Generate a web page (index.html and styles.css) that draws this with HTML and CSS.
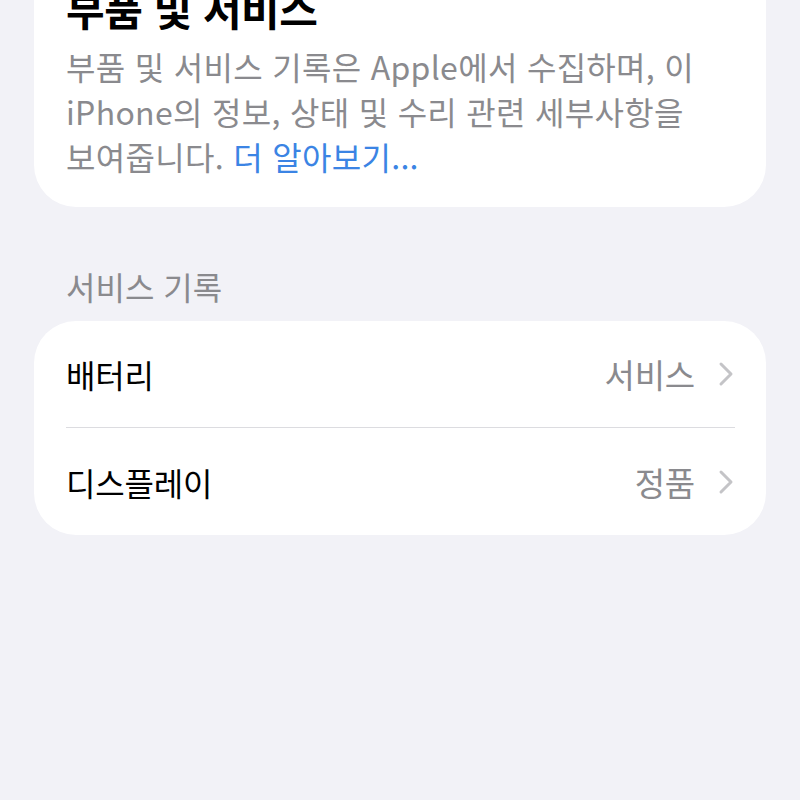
FILE: index.html
```html
<!DOCTYPE html>
<html lang="ko">
<head>
<meta charset="utf-8">
<link rel="stylesheet" href="styles.css">
</head>
<body>
<div class="page">
  <section class="card intro">
    <h1 class="title">부품 및 서비스</h1>
    <p class="desc">부품 및 서비스 기록은 Apple에서 수집하며, 이<br>iPhone의 정보, 상태 및 수리 관련 세부사항을<br>보여줍니다. <span class="link">더 알아보기...</span></p>
  </section>
  <h2 class="section-header">서비스 기록</h2>
  <section class="card list">
    <div class="row">
      <span class="label">배터리</span>
      <span class="value">서비스</span>
      <svg class="chev" width="16" height="26" viewBox="0 0 16 26"><path d="M3 3 L13 13 L3 23" fill="none" stroke="#c4c4c7" stroke-width="3" stroke-linecap="round" stroke-linejoin="round"/></svg>
    </div>
    <div class="sep"></div>
    <div class="row">
      <span class="label">디스플레이</span>
      <span class="value">정품</span>
      <svg class="chev" width="16" height="26" viewBox="0 0 16 26"><path d="M3 3 L13 13 L3 23" fill="none" stroke="#c4c4c7" stroke-width="3" stroke-linecap="round" stroke-linejoin="round"/></svg>
    </div>
  </section>
</div>
</body>
</html>
```
FILE: styles.css
```css
html, body {
  margin: 0;
  padding: 0;
  background: #f2f2f7;
  height: 100%;
  overflow: hidden;
}
body {
  font-family: "Noto Sans CJK KR", "Noto Sans", sans-serif;
}
.page {
  padding: 0 34px;
}
.card {
  background: #ffffff;
  border-radius: 42px;
}
.intro {
  margin-top: -44px;
  padding: 28px 32px 28px 32px;
}
.title {
  margin: 0;
  font-size: 42px;
  line-height: 48px;
  font-weight: 700;
  color: #000;
  letter-spacing: -0.5px;
  white-space: nowrap;
}
.desc {
  margin: 12px 0 0 0;
  font-size: 32px;
  line-height: 45px;
  color: #8a8a8e;
  letter-spacing: 0.3px;
  white-space: nowrap;
}
.link {
  color: #3b84e4;
}
.section-header {
  margin: 61px 0 17px 32px;
  font-size: 32px;
  line-height: 36px;
  font-weight: 400;
  color: #8a8a8e;
}
.list {
  padding: 0;
  overflow: hidden;
}
.row {
  display: flex;
  align-items: center;
  height: 106px;
  padding: 0 32px;
}
.row + .sep + .row {
  height: 107px;
}
.label {
  flex: 1;
  font-size: 32px;
  color: #000;
  letter-spacing: -0.2px;
}
.value {
  font-size: 33px;
  color: #8a8a8e;
  letter-spacing: -0.2px;
  margin-right: 23px;
}
.chev {
  display: block;
}
.sep {
  height: 1px;
  background: #dcdce0;
  margin: 0 31px 0 32px;
}
```
